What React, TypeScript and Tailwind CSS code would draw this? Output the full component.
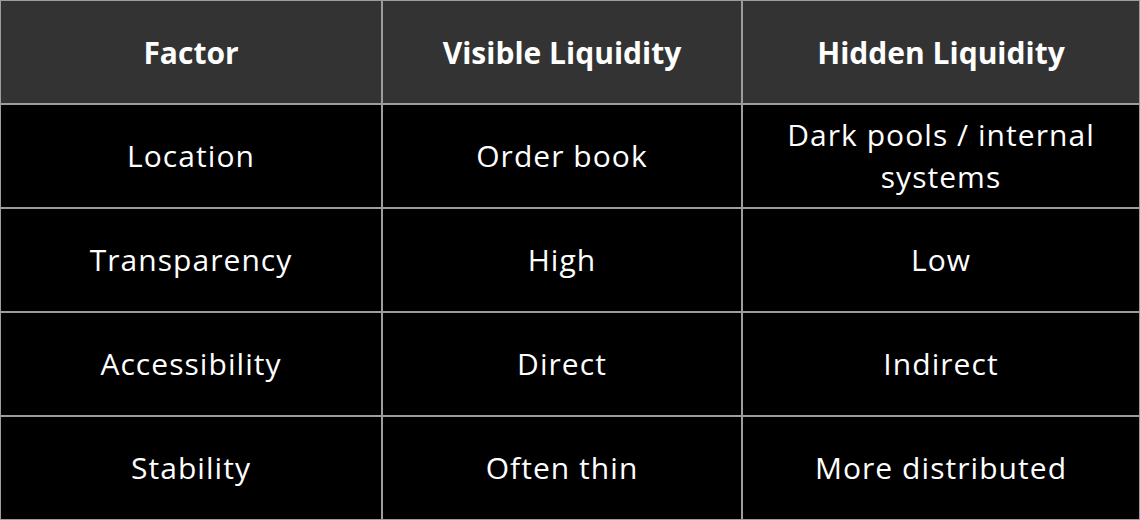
const HEAD = ["Factor", "Visible Liquidity", "Hidden Liquidity"];

const ROWS = [
  ["Location", "Order book", "Dark pools / internal systems"],
  ["Transparency", "High", "Low"],
  ["Accessibility", "Direct", "Indirect"],
  ["Stability", "Often thin", "More distributed"],
];

export default function App() {
  return (
    <div
      className="grid h-[520px] w-[1140px] grid-cols-[380px_358px_1fr] grid-rows-5 gap-[2px] bg-[#9d9d9d] p-px text-white"
      style={{ fontFamily: '"Open Sans", sans-serif' }}
    >
      {HEAD.map((h) => (
        <div key={h} className="flex items-center justify-center bg-[#333333] px-6 text-center text-[30px] font-bold">
          {h}
        </div>
      ))}
      {ROWS.map((r) =>
        r.map((c, i) => (
          <div key={r[0] + i} className="flex items-center justify-center bg-black px-6 text-center text-[30px] leading-[42px] tracking-[0.035em]">
            {c}
          </div>
        ))
      )}
    </div>
  );
}
